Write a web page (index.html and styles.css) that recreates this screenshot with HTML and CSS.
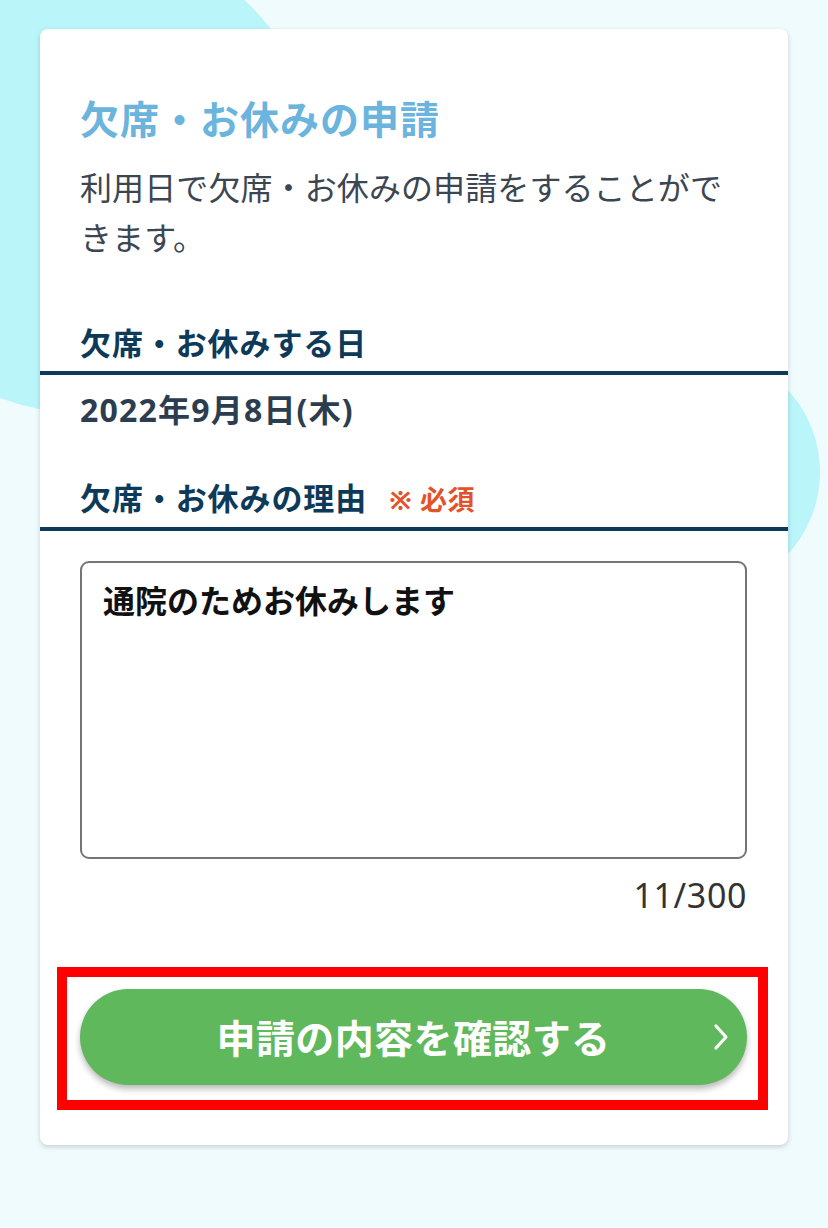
FILE: index.html
```html
<!DOCTYPE html>
<html lang="ja">
<head>
<meta charset="utf-8">
<title>欠席・お休みの申請</title>
<link rel="stylesheet" href="styles.css">
</head>
<body>
<div class="bg-circle bg-circle-a"></div>
<div class="bg-circle bg-circle-b"></div>
<main class="card">
  <section class="intro">
    <h1 class="title">欠席・お休みの申請</h1>
    <p class="desc">利用日で欠席・お休みの申請をすることができます。</p>
  </section>
  <h2 class="label label-first">欠席・お休みする日</h2>
  <p class="date">2022年9月8日(木)</p>
  <h2 class="label label-second">欠席・お休みの理由<span class="required">※ 必須</span></h2>
  <section class="form">
    <div class="textarea">通院のためお休みします</div>
    <div class="counter">11/300</div>
    <div class="highlight">
      <button class="btn" type="button">
        <span class="btn-spacer"></span>
        <span class="btn-text">申請の内容を確認する</span>
        <svg class="chev" width="20" height="28" viewBox="0 0 20 28" aria-hidden="true"><path d="M5 3 L15 14 L5 25" fill="none" stroke="#fff" stroke-width="3.2" stroke-linecap="round" stroke-linejoin="round"/></svg>
      </button>
    </div>
  </section>
</main>
</body>
</html>
```
FILE: styles.css
```css
* { box-sizing: border-box; }
html, body { margin: 0; padding: 0; }
body {
  background: #f0fbfd;
  font-family: "Noto Sans", "Noto Sans CJK JP", sans-serif;
  min-height: 1228px;
  position: relative;
  overflow: hidden;
}
.bg-circle {
  position: absolute;
  border-radius: 50%;
  background: #b9f5f9;
  z-index: 0;
}
.bg-circle-a { left: -155px; top: -63px; width: 476px; height: 476px; }
.bg-circle-b { left: 578px; top: 351px; width: 242px; height: 242px; }

.card {
  position: relative;
  z-index: 1;
  margin: 29px 40px 0 40px;
  width: 748px;
  background: #fff;
  border-radius: 8px;
  box-shadow: 0 2px 5px rgba(40, 60, 80, 0.22);
  padding: 63px 0 35px 0;
}
.intro { padding: 0 41px 0 40px; }
.title {
  margin: 0;
  font-size: 39px;
  line-height: 54px;
  font-weight: 700;
  color: #6bb4de;
  letter-spacing: 1px;
}
.desc {
  margin: 17px 0 0 0;
  font-size: 32px;
  line-height: 50px;
  color: #3b4652;
  font-weight: 400;
  letter-spacing: 0.1px;
}
.label {
  margin: 0;
  padding: 0 41px 6px 40px;
  font-size: 31px;
  line-height: 44px;
  font-weight: 700;
  color: #0d3a58;
  border-bottom: 4px solid #0d3a58;
  display: flex;
  align-items: baseline;
  letter-spacing: 0.9px;
}
.label-first { margin-top: 58px; }
.label-second { margin-top: 44px; padding-bottom: 5px; }
.required {
  margin-left: 22px;
  font-size: 27px;
  color: #e2522b;
  font-weight: 700;
  letter-spacing: 0.5px;
}
.date {
  margin: 13px 0 0 0;
  padding: 0 41px 0 40px;
  font-size: 32px;
  line-height: 44px;
  font-weight: 700;
  color: #2c3d4f;
  letter-spacing: 1.2px;
}
.form { padding: 30px 41px 0 40px; }
.textarea {
  height: 298px;
  border: 2px solid #757575;
  border-radius: 9px;
  padding: 15px 21px;
  font-size: 32px;
  line-height: 46px;
  font-weight: 700;
  color: #111;
}
.counter {
  margin-top: 16px;
  text-align: right;
  font-size: 34px;
  line-height: 40px;
  color: #333;
  letter-spacing: 0.6px;
}
.highlight {
  margin: 52px -21px 0 -23px;
  border: 10px solid #ff0000;
  padding: 12px 11px 15px 13px;
}
.btn {
  display: grid;
  grid-template-columns: 1fr auto 1fr;
  align-items: center;
  width: 100%;
  height: 96px;
  border: none;
  border-radius: 48px;
  background: #60b85d;
  box-shadow: 0 4px 6px rgba(0, 0, 0, 0.28);
  padding: 0 16px 0 16px;
  font-family: inherit;
  cursor: pointer;
}
.btn-text {
  font-size: 39px;
  font-weight: 700;
  color: #fff;
  line-height: 1;
  letter-spacing: 0.4px;
}
.chev { justify-self: end; }
```
